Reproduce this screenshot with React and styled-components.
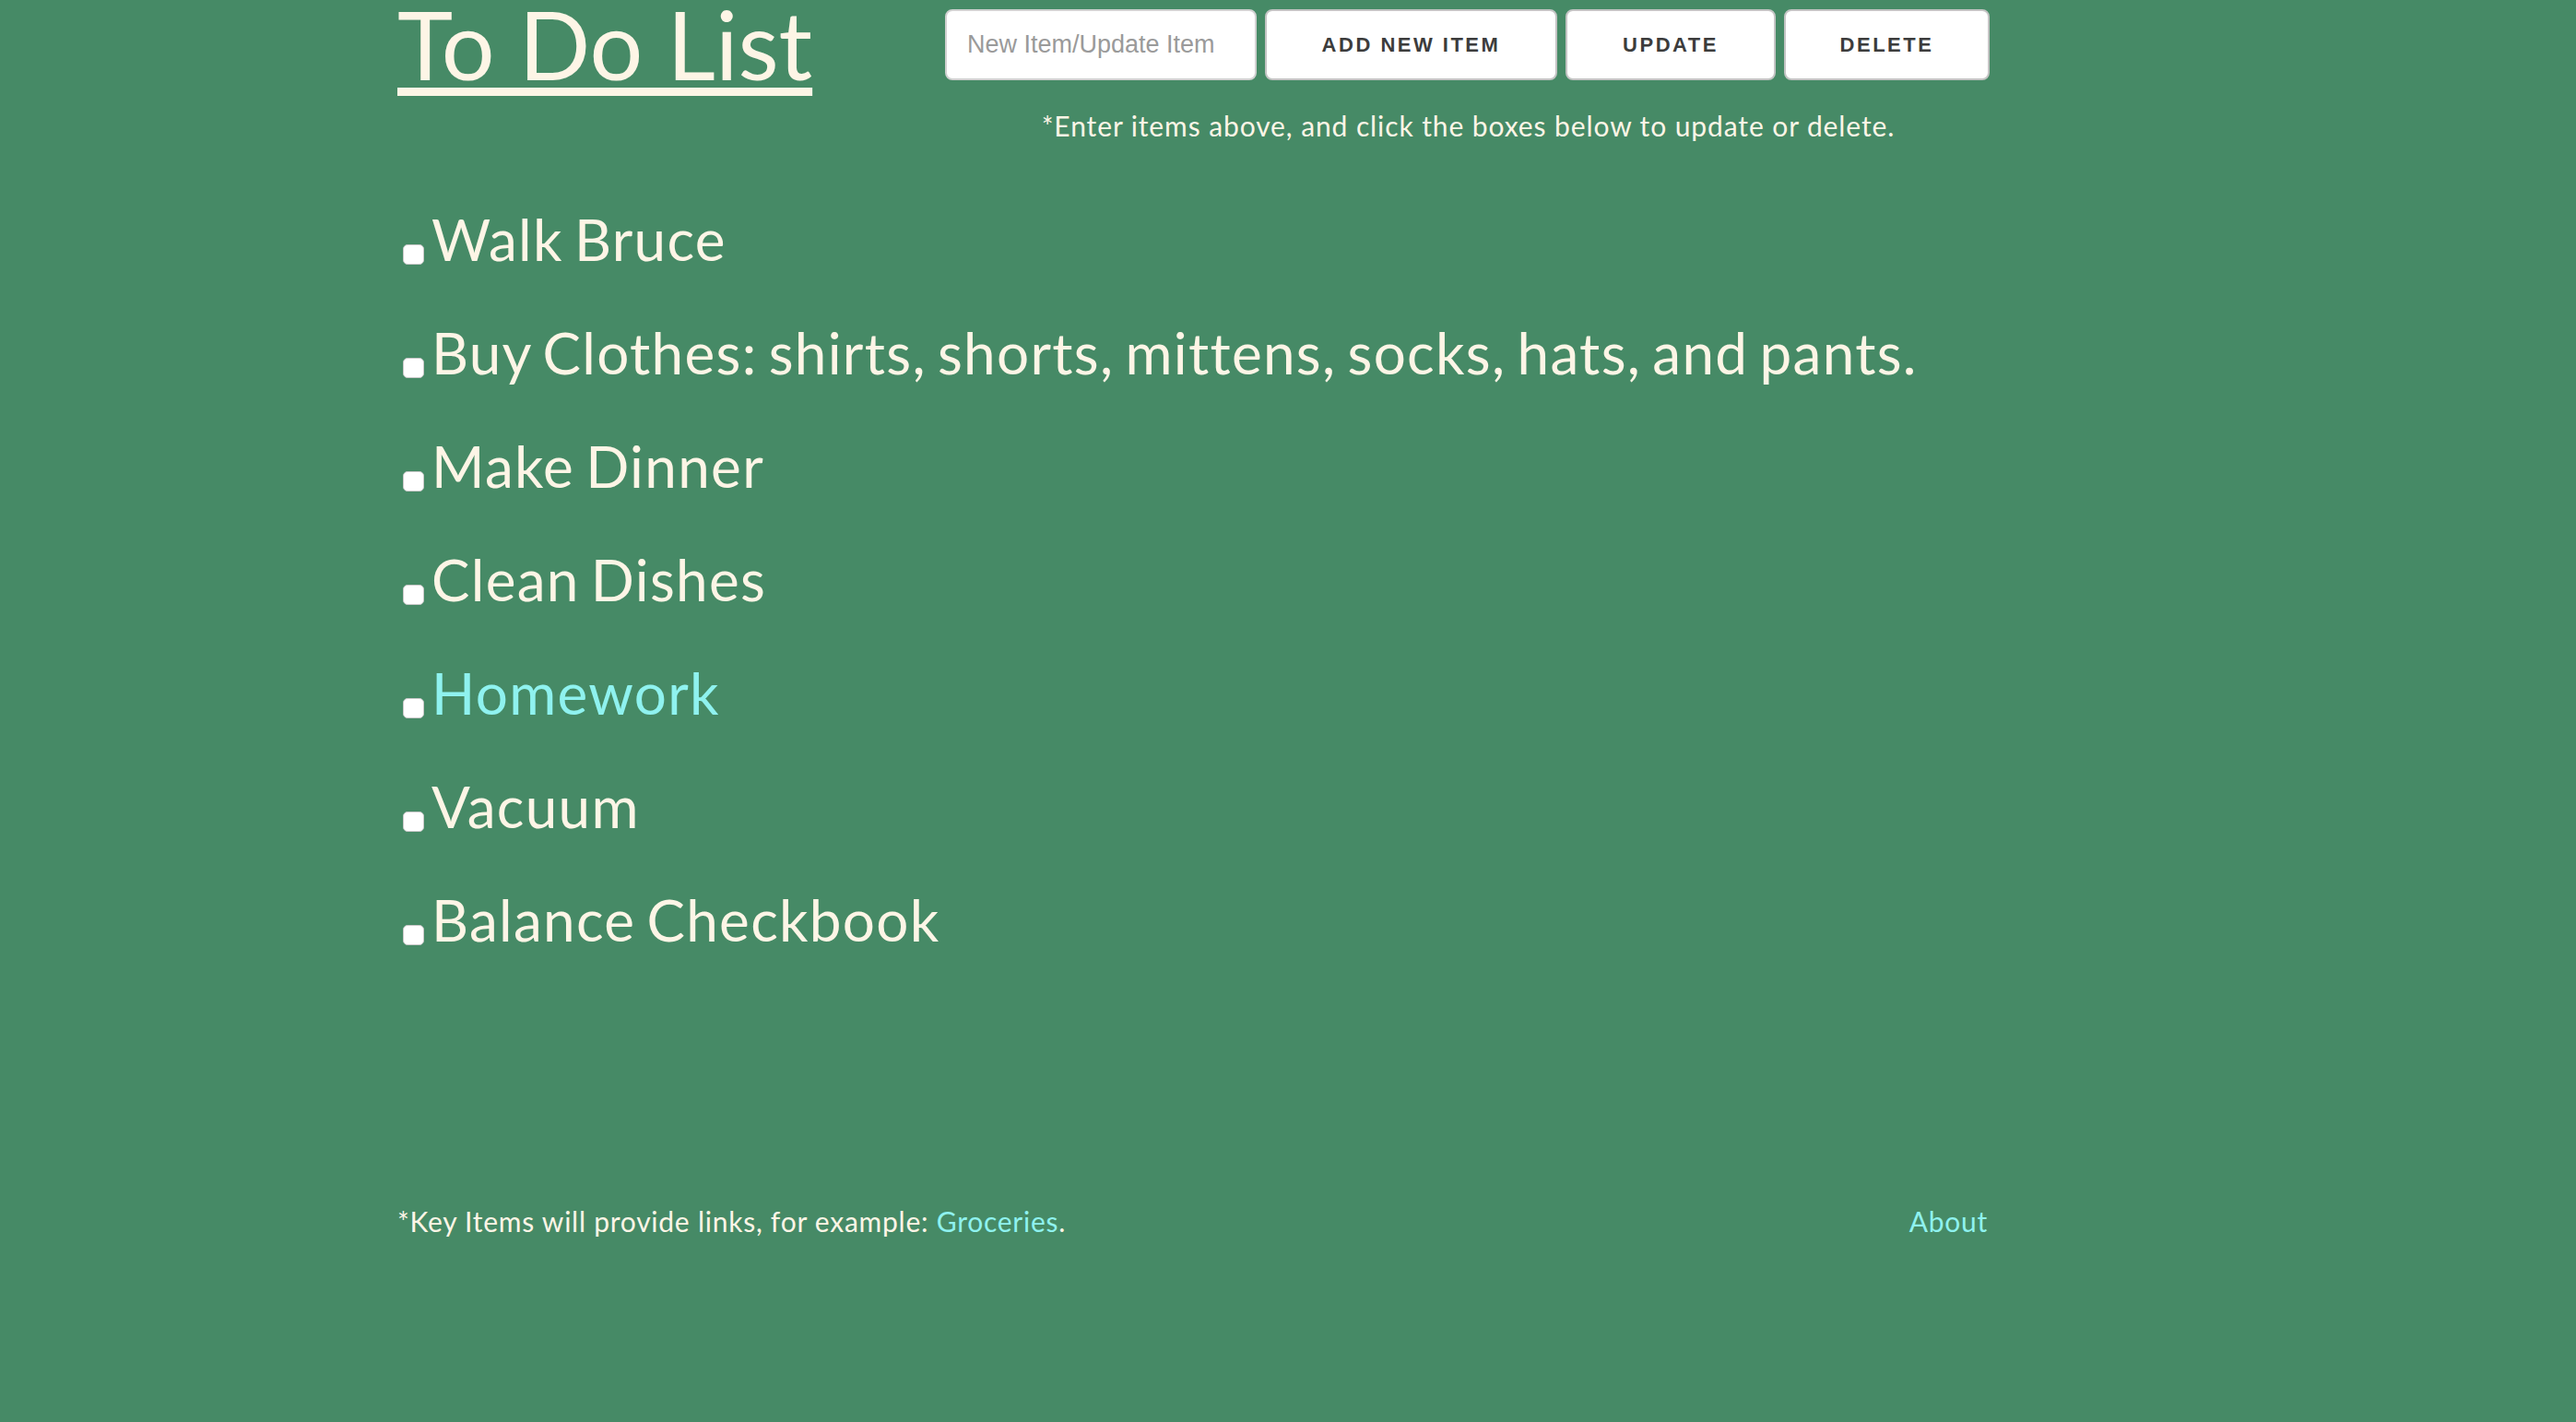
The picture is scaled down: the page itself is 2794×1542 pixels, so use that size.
import React from "react";
import styled, { createGlobalStyle } from "styled-components";

const Global = createGlobalStyle`
  html, body { margin: 0; padding: 0; }
  body {
    background: #468a66;
    font-family: Lato, "Open Sans", sans-serif;
    color: #fdf5e6;
  }
`;

const Page = styled.div`
  width: 1729px;
  margin-left: 431px;
  min-height: 1542px;
  display: flex;
  flex-direction: column;
`;

const Header = styled.header`
  display: flex;
  align-items: flex-start;
`;

const TitleCol = styled.div`
  width: 594px;
  flex-shrink: 0;
  padding-top: 2px;
`;

const Title = styled.h1`
  margin: 0;
  font-size: 102px;
  font-weight: 400;
  line-height: 92px;
  text-decoration: underline;
  text-decoration-thickness: 9px;
  text-underline-offset: 8px;
  white-space: nowrap;
`;

const Controls = styled.div`
  display: flex;
  flex-direction: column;
  align-items: center;
  padding-top: 10px;
  width: 1135px;
`;

const ControlRow = styled.div`
  display: flex;
  gap: 9px;
  width: 100%;
`;

const Input = styled.input`
  box-sizing: border-box;
  width: 338px;
  height: 77px;
  padding: 0 22px;
  border: 2px solid #d1d1d1;
  border-radius: 8px;
  background: #fff;
  font-family: "Liberation Sans", Arial, sans-serif;
  font-size: 27px;
  color: #333;
  outline: none;
  &::placeholder { color: #9a9a9a; }
`;

const Button = styled.button`
  box-sizing: border-box;
  width: ${(p) => p.$w}px;
  height: 77px;
  padding: 0;
  border: 2px solid #c4c4c4;
  border-radius: 8px;
  background: #fff;
  color: #3c3c3c;
  font-family: "Liberation Sans", Arial, sans-serif;
  font-weight: 700;
  font-size: 22px;
  letter-spacing: 2.5px;
  text-transform: uppercase;
  cursor: pointer;
`;

const Hint = styled.p`
  margin: 31px 0 0;
  font-size: 30px;
  line-height: 36px;
  letter-spacing: 0.9px;
`;

const List = styled.ul`
  list-style: none;
  margin: 44px 0 0;
  padding: 0;
`;

const Item = styled.li`
  font-size: 62px;
  line-height: 123px;
  letter-spacing: 1.3px;
  word-spacing: -5px;
  white-space: nowrap;
  color: ${(p) => (p.$link ? "#8ff2ef" : "#fdf5e6")};
`;

const Box = styled.span`
  display: inline-block;
  box-sizing: border-box;
  width: 23px;
  height: 22px;
  margin: 0 8px 0 6px;
  vertical-align: -4px;
  background: #fff;
  border: 1px solid #c9c9c9;
  border-radius: 5px;
`;

const Footer = styled.footer`
  margin-top: 247px;
  display: flex;
  justify-content: space-between;
  padding-right: 4px;
  font-size: 30px;
  line-height: 36px;
  letter-spacing: 0.75px;
`;

const Link = styled.a`
  color: #8ff2ef;
  text-decoration: none;
`;

const items = [
  { t: "Walk Bruce" },
  { t: "Buy Clothes: shirts, shorts, mittens, socks, hats, and pants." },
  { t: "Make Dinner" },
  { t: "Clean Dishes" },
  { t: "Homework", link: true },
  { t: "Vacuum" },
  { t: "Balance Checkbook" },
];

export default function App() {
  return (
    <>
      <Global />
      <Page>
        <Header>
          <TitleCol>
            <Title>To Do List</Title>
          </TitleCol>
          <Controls>
            <ControlRow>
              <Input placeholder="New Item/Update Item" />
              <Button $w={317}>Add New Item</Button>
              <Button $w={228}>Update</Button>
              <Button $w={223}>Delete</Button>
            </ControlRow>
            <Hint>*Enter items above, and click the boxes below to update or delete.</Hint>
          </Controls>
        </Header>
        <List>
          {items.map((it) => (
            <Item key={it.t} $link={it.link}>
              <Box />
              {it.t}
            </Item>
          ))}
        </List>
        <Footer>
          <span>
            *Key Items will provide links, for example: <Link href="#">Groceries</Link>.
          </span>
          <Link href="#">About</Link>
        </Footer>
      </Page>
    </>
  );
}
